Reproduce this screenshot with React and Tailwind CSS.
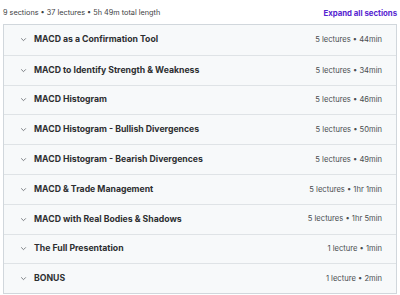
import React from "react";

const sections = [
  ["MACD as a Confirmation Tool", "5 lectures • 44min"],
  ["MACD to Identify Strength & Weakness", "5 lectures • 34min"],
  ["MACD Histogram", "5 lectures • 46min"],
  ["MACD Histogram - Bullish Divergences", "5 lectures • 50min"],
  ["MACD Histogram - Bearish Divergences", "5 lectures • 49min"],
  ["MACD & Trade Management", "5 lectures • 1hr 1min"],
  ["MACD with Real Bodies & Shadows", "5 lectures • 1hr 5min"],
  ["The Full Presentation", "1 lecture • 1min"],
  ["BONUS", "1 lecture • 2min"],
];

function Chevron() {
  return (
    <svg width="7" height="7" viewBox="0 0 24 24" fill="none" stroke="#6a6f73" strokeWidth="3" strokeLinecap="round" strokeLinejoin="round">
      <path d="M5 9l7 7 7-7" />
    </svg>
  );
}

export default function App() {
  return (
    <div className="w-[400px] h-[295px] bg-white overflow-hidden" style={{ fontFamily: "Inter, 'Noto Sans', sans-serif" }}>
      <div className="h-[24px] flex items-center justify-between pl-[3px] pr-[3px] pt-[3px]">
        <span className="text-[7.3px] text-[#3e4143]">9 sections • 37 lectures • 5h 49m total length</span>
        <span className="text-[7.8px] font-bold text-[#5624d0]">Expand all sections</span>
      </div>
      <div className="mx-[3px] border border-[#d1d7dc] bg-[#f7f9fa]">
        {sections.map(([t, m], i) => (
          <div key={i} className={"h-[29.8px] flex items-center pl-[16px] pr-[14px] " + (i > 0 ? "border-t border-[#dfe3e6]" : "")}>
            <Chevron />
            <span className="ml-[7px] text-[8.7px] font-bold text-[#2d2f31] flex-1">{t}</span>
            <span className="text-[7.6px] text-[#4a4e51]">{m}</span>
          </div>
        ))}
      </div>
    </div>
  );
}
